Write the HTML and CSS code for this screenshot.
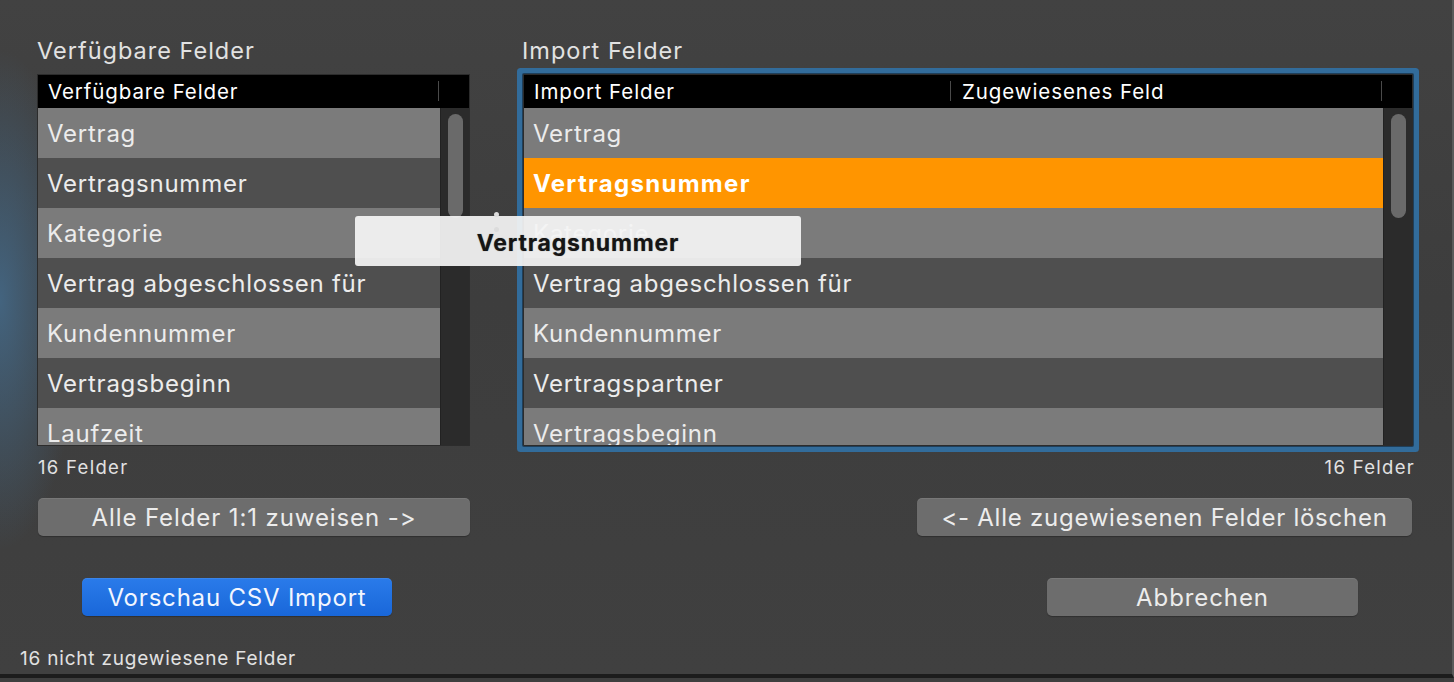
FILE: index.html
```html
<!DOCTYPE html>
<html lang="de">
<head>
    <meta charset="UTF-8">
    <title>CSV Import</title>
    <link rel="stylesheet" href="styles.css">
</head>
<body>
<div class="window">

    <!-- Field lists -->
    <div class="panels">
        <section class="panel panel-left">
            <h2 class="panel-title">Verfügbare Felder</h2>
            <div class="table">
                <div class="table-head">
                    <span class="col col-main">Verfügbare Felder</span>
                    <span class="col col-scroll"></span>
                </div>
                <div class="table-body">
                    <ul class="rows">
                        <li class="row">Vertrag</li>
                        <li class="row">Vertragsnummer</li>
                        <li class="row">Kategorie</li>
                        <li class="row">Vertrag abgeschlossen für</li>
                        <li class="row">Kundennummer</li>
                        <li class="row">Vertragsbeginn</li>
                        <li class="row">Laufzeit</li>
                    </ul>
                    <div class="scrollbar"><div class="thumb"></div></div>
                </div>
            </div>
            <p class="count">16 Felder</p>
            <button class="btn btn-wide">Alle Felder 1:1 zuweisen -&gt;</button>
        </section>

        <section class="panel panel-right">
            <h2 class="panel-title">Import Felder</h2>
            <div class="table table-focus">
                <div class="table-head">
                    <span class="col col-import">Import Felder</span>
                    <span class="col col-assigned">Zugewiesenes Feld</span>
                    <span class="col col-scroll"></span>
                </div>
                <div class="table-body">
                    <ul class="rows">
                        <li class="row">Vertrag</li>
                        <li class="row selected">Vertragsnummer</li>
                        <li class="row">Kategorie</li>
                        <li class="row">Vertrag abgeschlossen für</li>
                        <li class="row">Kundennummer</li>
                        <li class="row">Vertragspartner</li>
                        <li class="row">Vertragsbeginn</li>
                    </ul>
                    <div class="scrollbar"><div class="thumb"></div></div>
                </div>
            </div>
            <p class="count count-right">16 Felder</p>
            <div class="btn-row-right">
                <button class="btn btn-clear">&lt;- Alle zugewiesenen Felder löschen</button>
            </div>
        </section>
    </div>

    <!-- Dialog buttons -->
    <div class="actions">
        <button class="btn btn-primary">Vorschau CSV Import</button>
        <button class="btn btn-cancel">Abbrechen</button>
    </div>

    <p class="status">16 nicht zugewiesene Felder</p>

    <!-- Drag image while moving a field -->
    <div class="drag-ghost">Vertragsnummer</div>
    <span class="drag-dot dot-a"></span>
    <span class="drag-dot dot-b"></span>
</div>
</body>
</html>
```

FILE: styles.css
```css
/* Global Styles */
html, body {
    margin: 0;
    padding: 0;
    height: 100%;
}

body {
    font-family: 'Inter', 'Open Sans', sans-serif;
    font-feature-settings: "calt" 0, "liga" 0;
    color: #e6e6e6;
    background-color: #3e3e3e;
    overflow: hidden;
}

.window {
    position: relative;
    height: 678px;
    box-sizing: border-box;
    border-right: 2px solid #5a5a5a;
    border-bottom: 4px solid #1c1c1c;
    background:
        radial-gradient(ellipse 80px 250px at 0 300px, rgba(68, 104, 134, 0.9), rgba(68, 104, 134, 0) 100%),
        linear-gradient(to bottom, #424242 0, #3d3d3d 300px, #404040 100%);
}

ul {
    list-style: none;
    margin: 0;
    padding: 0;
}

p, h2 {
    margin: 0;
}

/* Panels */
.panels {
    display: flex;
    padding: 37px 0 0 37px;
    gap: 53px;
}

.panel {
    display: flex;
    flex-direction: column;
}

.panel-left {
    width: 433px;
}

.panel-right {
    width: 890px;
}

.panel-title {
    font-size: 23.5px;
    letter-spacing: 1px;
    font-weight: 400;
    color: #e2e2e2;
    line-height: 28px;
    margin-bottom: 9px;
}

.panel-right .panel-title {
    margin-left: -1px;
}

/* Tables */
.table {
    height: 372px;
    background: #2a2a2a;
    border: 1px solid #2c2c2c;
    box-sizing: border-box;
    display: flex;
    flex-direction: column;
    overflow: hidden;
}

.table-focus {
    box-shadow: 0 0 0 1px #1f3f5a, 0 0 0 6px #326c9b;
    border-radius: 1px;
}

.table-head {
    display: flex;
    height: 33px;
    flex: none;
    background: #000;
    color: #fff;
    font-size: 20.5px;
    letter-spacing: 0.9px;
    line-height: 34px;
}

.col {
    box-sizing: border-box;
    padding-left: 10px;
    position: relative;
}

.col-main {
    flex: 1;
}

.col-import {
    width: 427px;
}

.col-assigned {
    flex: 1;
    padding-left: 11px;
}

.col-scroll {
    width: 30px;
}

.col-main::after,
.col-import::after,
.col-assigned::after {
    content: "";
    position: absolute;
    right: 0;
    top: 6px;
    height: 20px;
    width: 1px;
    background: #4a4a4a;
}

.table-body {
    flex: 1;
    display: flex;
    min-height: 0;
}

.rows {
    flex: 1;
    overflow: hidden;
}

.row {
    height: 50px;
    line-height: 52px;
    padding-left: 9px;
    font-size: 24px;
    letter-spacing: 0.75px;
    color: #ececec;
    background: #7b7b7b;
    white-space: nowrap;
}

.row:nth-child(even) {
    background: #4f4f4f;
}

.row.selected {
    background: #ff9500;
    color: #fff;
    font-weight: 700;
    letter-spacing: 1.3px;
}

.scrollbar {
    width: 29px;
    flex: none;
    background: #2b2b2b;
    border-left: 1px solid #222;
    box-sizing: border-box;
    padding: 6px 0 0 7px;
}

.thumb {
    width: 15px;
    height: 104px;
    border-radius: 8px;
    background: #6a6a6a;
}

/* Counts */
.count {
    font-size: 18.5px;
    letter-spacing: 1.3px;
    color: #e2e2e2;
    margin: 9px 0 0 1px;
    line-height: 24px;
}

.count-right {
    text-align: right;
    margin-right: -2px;
}

/* Buttons */
.btn {
    font-family: inherit;
    font-feature-settings: "calt" 0, "liga" 0;
    font-size: 24px;
    letter-spacing: 0.9px;
    color: #ececec;
    background: #6d6d6d;
    border: none;
    border-radius: 5px;
    height: 38px;
    padding: 0;
    box-shadow: 0 1px 1px rgba(0, 0, 0, 0.25), inset 0 1px 0 rgba(255, 255, 255, 0.08);
    cursor: pointer;
}

.btn-wide {
    width: 432px;
    margin: 19px 0 0 1px;
}

.btn-row-right {
    display: flex;
    justify-content: flex-end;
    margin-top: 19px;
}

.btn-clear {
    width: 495px;
    margin-right: 1px;
    letter-spacing: 0.75px;
}

.actions {
    display: flex;
    justify-content: space-between;
    padding: 42px 94px 0 82px;
}

.btn-primary {
    width: 310px;
    background: linear-gradient(to bottom, #2a7bea, #1967d9);
    color: #f2f6ff;
    letter-spacing: 0.8px;
}

.btn-cancel {
    width: 311px;
}

.status {
    font-size: 19px;
    letter-spacing: 0.8px;
    color: #e2e2e2;
    padding: 31px 0 0 20px;
    line-height: 24px;
}

/* Drag image */
.drag-ghost {
    position: absolute;
    left: 355px;
    top: 216px;
    width: 446px;
    height: 50px;
    border-radius: 3px;
    background: rgba(244, 244, 244, 0.93);
    color: #151515;
    font-size: 23px;
    font-weight: 700;
    letter-spacing: 0.8px;
    line-height: 54px;
    text-align: center;
    text-shadow: 0 0 1px rgba(0, 0, 0, 0.5);
}

.drag-dot {
    position: absolute;
    width: 5px;
    height: 5px;
    border-radius: 50%;
    background: #dcdcdc;
}

.dot-a {
    left: 494px;
    top: 212px;
}

.dot-b {
    left: 494px;
    top: 227px;
}
```
